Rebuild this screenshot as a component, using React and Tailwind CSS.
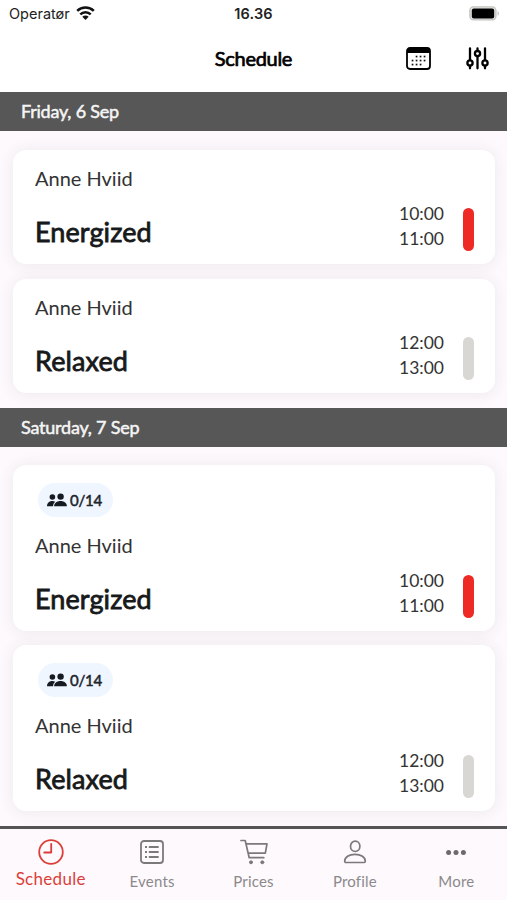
import React from "react";

function WifiIcon() {
  return (
    <svg className="h-[15px] w-[19px]" viewBox="0 0 19 15" fill="none" stroke="#111" strokeWidth="2.5">
      <path d="M1.200 4.900C5.800.4 13.200.4 17.800 4.900" />
      <path d="M4.300 8.300c2.900-2.900 7.500-2.900 10.400 0" />
      <path d="M9.500 13.900 6.300 10.700c1.800-1.600 4.600-1.600 6.400 0z" fill="#111" stroke="none" />
    </svg>
  );
}

function BatteryIcon() {
  return (
    <svg className="h-[15px] w-[31px]" viewBox="0 0 31 15">
      <rect x=".9" y=".9" width="26" height="13" rx="3.6" fill="#e6e6e2" stroke="#c4c4c0" strokeWidth="1.4" />
      <rect x="2.800" y="2.600" width="22.400" height="9.800" rx="2" fill="#000" />
      <path d="M28.600 5.200c1.600.5 1.600 4 0 4.500z" fill="#b9b9b5" />
    </svg>
  );
}

const dots = [
  [10.5, 9.5], [14.5, 9.5], [18.5, 9.5],
  [6.5, 13.5], [10.5, 13.5], [14.5, 13.5], [18.5, 13.5],
  [6.5, 17.5], [10.5, 17.5], [14.5, 17.5],
];

function CalendarIcon() {
  return (
    <svg className="h-[23px] w-[25px]" viewBox="0 0 25 23">
      <rect x="1" y="1" width="23" height="21" rx="3" fill="#fff" stroke="#000" strokeWidth="1.8" />
      <path d="M1 6V4a3 3 0 0 1 3-3h17a3 3 0 0 1 3 3v2z" fill="#000" />
      {dots.map(([x, y]) => (
        <rect key={x + "-" + y} x={x - 0.8} y={y - 0.8} width="1.7" height="1.7" fill="#111" />
      ))}
    </svg>
  );
}

function SlidersIcon() {
  return (
    <svg className="h-[23px] w-[23px]" viewBox="0 0 23 23" fill="none" stroke="#000" strokeWidth="2.3" strokeLinecap="round">
      <path d="M4 1.500v11.700M4 18.800v2.500M11.500 1.500v2.200M11.500 9.500v11.800M19 1.500v11.700M19 18.800v2.500" />
      <circle cx="4" cy="16" r="2.600" />
      <circle cx="11.500" cy="6.600" r="2.600" />
      <circle cx="19" cy="16" r="2.600" />
    </svg>
  );
}

function PeopleIcon() {
  return (
    <svg className="h-[14px] w-[20px]" viewBox="0 0 20 14" fill="#151b20">
      <circle cx="5.400" cy="4" r="2.800" />
      <path d="M0 13.300c0-3.200 2.200-5.300 5.200-5.300 1.200 0 2.200.3 3 .8C6.800 9.900 6.100 11.400 6.100 13.300z" />
      <circle cx="13.600" cy="3.600" r="3.200" />
      <path d="M7.100 13.300c0-3.200 2.700-5.300 6.400-5.300s6.400 2.100 6.400 5.300z" />
    </svg>
  );
}

function ClockIcon() {
  return (
    <svg className="h-[26px] w-[26px]" viewBox="0 0 26 26" fill="none" stroke="currentColor" strokeWidth="1.8">
      <circle cx="13" cy="13" r="11.800" />
      <path d="M13.200 4.800v8.700H6.200" strokeLinecap="round" strokeLinejoin="round" />
    </svg>
  );
}

function ListIcon() {
  return (
    <svg className="h-[24px] w-[24px]" viewBox="0 0 24 24" fill="none" stroke="currentColor" strokeWidth="1.800">
      <rect x="1" y="1" width="22" height="22" rx="3" />
      <path d="M9.500 7h8.500M9.500 12h8.500M9.500 17h8.500" strokeLinecap="round" />
      <path d="M5 7h2M5 12h2M5 17h2" strokeWidth="2" />
    </svg>
  );
}

function CartIcon() {
  return (
    <svg className="h-[26px] w-[28px]" viewBox="0 0 28 26" fill="none" stroke="currentColor" strokeWidth="1.700" strokeLinecap="round" strokeLinejoin="round">
      <path d="M1 1.500h4.200l4 17.200h14.600M6 4.900h21l-1.700 9.300H8.200" />
      <circle cx="11" cy="23.300" r="1.500" fill="currentColor" strokeWidth="1" />
      <circle cx="22.300" cy="23.300" r="1.500" fill="currentColor" strokeWidth="1" />
    </svg>
  );
}

function PersonIcon() {
  return (
    <svg className="h-[24px] w-[24px]" viewBox="0 0 24 24" fill="none" stroke="currentColor" strokeWidth="1.700">
      <ellipse cx="12.200" cy="6.300" rx="4.700" ry="5.200" />
      <path d="M1.700 21.300c0-4.100 4.300-7 10.300-7s10.300 2.900 10.300 7c0 .8-.4 1.200-1.200 1.200H2.900c-.8 0-1.200-.4-1.200-1.200z" />
    </svg>
  );
}

function MoreIcon() {
  return (
    <svg className="h-[24px] w-[20px]" viewBox="0 0 20 24" fill="#6d6a6c">
      <circle cx="2.600" cy="12.500" r="2.500" />
      <circle cx="10" cy="12.500" r="2.500" />
      <circle cx="17.400" cy="12.500" r="2.500" />
    </svg>
  );
}

function DayBar({ children }) {
  return (
    <h2 className="flex h-[39px] shrink-0 items-center bg-[#575757] pl-[21px] text-[18px] text-[#f5f5f5] [-webkit-text-stroke:0.5px_#f5f5f5]">
      <span className="tracking-[-0.22px]">{children}</span>
    </h2>
  );
}

function Lesson({ title, start, end, active, count }) {
  return (
    <article className="rounded-[13px] bg-white pr-[21px] pl-[22px] shadow-[0_1px_16px_rgba(50,50,50,0.09)]">
      {count && (
        <div className="flex h-[52px] items-end pl-[3px]">
          <div className="flex h-[34px] w-[75px] items-center gap-[3px] rounded-full bg-[#eff6ff] pl-[9px] text-[15px] tracking-[-0.2px] text-[#20252b] [-webkit-text-stroke:0.5px_#20252b]">
            <PeopleIcon />
            <span>{count}</span>
          </div>
        </div>
      )}
      <div className="flex h-[114px] justify-between">
        <div className="flex flex-col pt-[16px]">
          <p className="text-[20px] leading-[24px] text-[#333]">Anne Hviid</p>
          <h3 className="mt-[25px] text-[27px] leading-[34px] tracking-[0.1px] text-[#17191a] [-webkit-text-stroke:0.8px_#17191a]">{title}</h3>
        </div>
        <div className="flex gap-[19px] pt-[52px]">
          <div className="text-[17.500px] leading-[24.500px] text-[#333]">
            <p>{start}</p>
            <p>{end}</p>
          </div>
          <div className={active ? "mt-[6px] h-[43px] w-[11px] rounded-full bg-[#ed2a24]" : "mt-[6px] h-[43px] w-[11px] rounded-full bg-[#d9d7d3]"} />
        </div>
      </div>
    </article>
  );
}

function Tab({ icon, label, active }) {
  return (
    <div className={active ? "flex flex-1 flex-col items-center text-[#dc3f3a]" : "flex flex-1 flex-col items-center text-[#7c797b]"}>
      <div className="flex h-[26px] items-center">{icon}</div>
      <span className={active ? "mt-[4px] text-[17px] leading-[20px] tracking-[0.3px]" : "mt-[6px] text-[15px] leading-[20px] tracking-[0.2px] text-[#8c898b]"}>{label}</span>
    </div>
  );
}

export default function App() {
  return (
    <div className="flex h-[900px] w-[507px] flex-col overflow-hidden bg-[#fdf9fd] font-['Lato',sans-serif]">
      <div className="grid h-[28px] shrink-0 grid-cols-3 items-center bg-white px-[9px] font-['Inter',sans-serif] text-[14px] text-[#222]">
        <div className="flex items-center gap-[6px]">
          <span className="text-[14.500px]">Operatør</span>
          <div className="-mt-[2px]"><WifiIcon /></div>
        </div>
        <span className="text-center text-[14.500px] font-semibold tracking-[0.2px]">16.36</span>
        <div className="-mr-[2px] -mt-[2px] flex justify-end"><BatteryIcon /></div>
      </div>
      <header className="grid h-[64px] shrink-0 grid-cols-3 items-center bg-white pb-[4px]">
        <span />
        <h1 className="text-center text-[20px] tracking-[-0.3px] text-black [-webkit-text-stroke:0.7px_black]">Schedule</h1>
        <div className="flex items-center justify-end gap-[35px] pr-[18px]">
          <CalendarIcon />
          <SlidersIcon />
        </div>
      </header>
      <main className="flex h-[734px] shrink-0 flex-col overflow-hidden">
        <DayBar>Friday, 6 Sep</DayBar>
        <section className="flex h-[277px] shrink-0 flex-col gap-[15px] pl-[13px] pr-[12px] pt-[19px]">
          <Lesson title="Energized" start="10:00" end="11:00" active />
          <Lesson title="Relaxed" start="12:00" end="13:00" />
        </section>
        <DayBar>Saturday, 7 Sep</DayBar>
        <section className="flex flex-1 flex-col gap-[14px] pl-[13px] pr-[12px] pt-[18px]">
          <Lesson title="Energized" start="10:00" end="11:00" active count="0/14" />
          <Lesson title="Relaxed" start="12:00" end="13:00" count="0/14" />
        </section>
      </main>
      <nav className="flex flex-1 border-t-[3px] border-[#555] pt-[10px]">
        <Tab icon={<ClockIcon />} label="Schedule" active />
        <Tab icon={<ListIcon />} label="Events" />
        <Tab icon={<CartIcon />} label="Prices" />
        <Tab icon={<PersonIcon />} label="Profile" />
        <Tab icon={<MoreIcon />} label="More" />
      </nav>
    </div>
  );
}
